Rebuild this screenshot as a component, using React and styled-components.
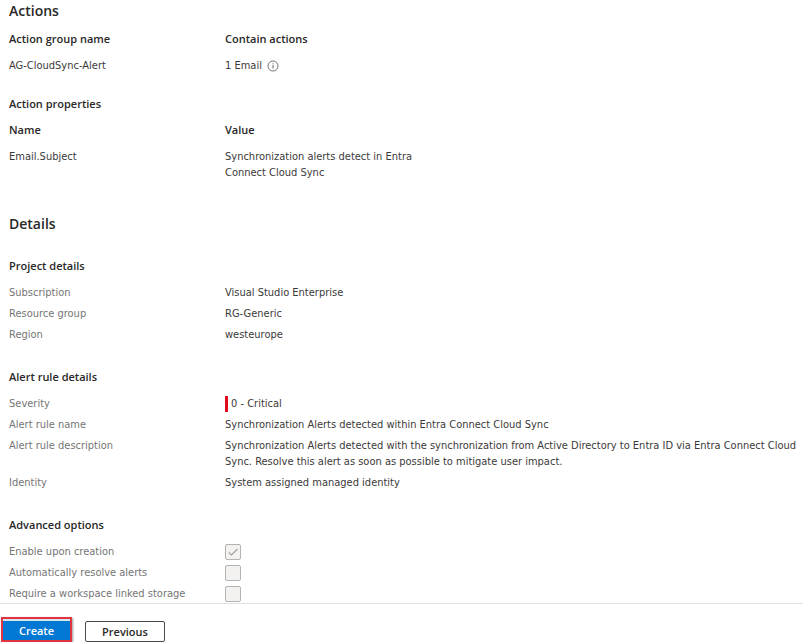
import React from 'react'
import styled, { createGlobalStyle } from 'styled-components'

const GlobalStyle = createGlobalStyle`
  * {
    box-sizing: border-box;
  }
  body {
    margin: 0;
    background: #fff;
    color: #3b3a39;
    font-family: "DejaVu Sans Condensed", "Open Sans", sans-serif;
    font-size: 11px;
    line-height: 16px;
  }
`

const headingFont = '"Open Sans", "Noto Sans", sans-serif'

const Content = styled.main`
  padding: 0 4px 1px 9px;
`

const SectionTitle = styled.h2`
  margin: 0;
  padding-top: ${({ $spaced }) => ($spaced ? '33px' : '1px')};
  color: #292827;
  font-family: ${headingFont};
  font-size: 14px;
  line-height: 20px;
  font-weight: 600;
`

const SubTitle = styled.h3`
  margin: 0;
  padding-top: ${({ $gap }) => $gap}px;
  color: #292827;
  font-family: ${headingFont};
  font-size: 11px;
  font-weight: 600;
`

const Table = styled.table`
  margin-top: 10px;
  width: 432px;
  table-layout: fixed;
  border-collapse: collapse;
`

const HeadCell = styled.th`
  padding: 0;
  color: #292827;
  font-family: ${headingFont};
  text-align: left;
  font-weight: 600;
`

const Cell = styled.td`
  padding: 11px 24px 0 0;
  vertical-align: top;
`

const InfoLine = styled.span`
  display: flex;
  align-items: center;
  gap: 5px;
`

const Fields = styled.div`
  display: flex;
  flex-direction: column;
  gap: 5px;
  padding-top: 11px;
`

const FieldRow = styled.div`
  display: grid;
  grid-template-columns: 216px 1fr;
`

const FieldName = styled.span`
  color: #757575;
`

const FieldLabel = styled.label`
  color: #757575;
`

const Severity = styled.span`
  display: flex;
  align-items: center;
  gap: 3px;
`

const SeverityBar = styled.span`
  width: 3px;
  height: 16px;
  background: #e00b1c;
`

const CheckHolder = styled.span`
  display: grid;
  width: 16px;
  height: 16px;

  > * {
    grid-area: 1 / 1;
  }
`

const Checkbox = styled.input`
  appearance: none;
  width: 16px;
  height: 16px;
  margin: 0;
  border: 1px solid #b5b3b1;
  border-radius: 2px;
  background: #f3f2f1;
`

const Footer = styled.footer`
  display: flex;
  align-items: flex-start;
  gap: 13px;
  padding: 13px 1px 0;
  border-top: 1px solid #e1e1e1;
`

const Highlight = styled.div`
  padding-top: 2px;
  border: 2px solid #e0343f;
  background: #d5e6ee;
  box-shadow: 1px 1px 2px rgba(0, 0, 0, 0.4);
`

const Button = styled.button`
  display: block;
  width: ${({ $primary }) => ($primary ? '67px' : '80px')};
  height: ${({ $primary }) => ($primary ? '19px' : '21px')};
  margin-top: ${({ $primary }) => ($primary ? '0' : '4px')};
  padding: 0;
  border: ${({ $primary }) => ($primary ? 'none' : '1px solid #4a4a4a')};
  border-radius: ${({ $primary }) => ($primary ? '0' : '2px')};
  background: ${({ $primary }) => ($primary ? '#0078d4' : '#fff')};
  color: ${({ $primary }) => ($primary ? '#fff' : '#292827')};
  font: 600 11px/16px ${headingFont};
`

const InfoIcon = () => (
  <svg width="12" height="12" viewBox="0 0 12 12" fill="none" stroke="#666" aria-hidden="true">
    <circle cx="6" cy="6" r="5" strokeWidth="0.9" />
    <path d="M6 5.2V8.6M6 3.3V4.3" strokeWidth="1" />
  </svg>
)

const CheckMark = () => (
  <svg width="16" height="16" viewBox="0 0 16 16" fill="none" stroke="#a19f9d" aria-hidden="true">
    <path d="M3.8 8.3L6.5 11L12.4 5" strokeWidth="1.1" />
  </svg>
)

const projectDetails = [
  { name: 'Subscription', value: 'Visual Studio Enterprise' },
  { name: 'Resource group', value: 'RG-Generic' },
  { name: 'Region', value: 'westeurope' },
]

const ruleDetails = [
  {
    name: 'Severity',
    value: (
      <Severity>
        <SeverityBar />
        0 - Critical
      </Severity>
    ),
  },
  { name: 'Alert rule name', value: 'Synchronization Alerts detected within Entra Connect Cloud Sync' },
  {
    name: 'Alert rule description',
    value: 'Synchronization Alerts detected with the synchronization from Active Directory to Entra ID via Entra Connect Cloud Sync. Resolve this alert as soon as possible to mitigate user impact.',
  },
  { name: 'Identity', value: 'System assigned managed identity' },
]

const options = [
  { id: 'enable', label: 'Enable upon creation', checked: true },
  { id: 'resolve', label: 'Automatically resolve alerts', checked: false },
  { id: 'storage', label: 'Require a workspace linked storage', checked: false },
]

const FieldList = ({ fields }) => (
  <Fields>
    {fields.map(({ name, value }) => (
      <FieldRow key={name}>
        <FieldName>{name}</FieldName>
        <div>{value}</div>
      </FieldRow>
    ))}
  </Fields>
)

const DataTable = ({ heads, cells }) => (
  <Table>
    <thead>
      <tr>
        {heads.map((head) => <HeadCell key={head} scope="col">{head}</HeadCell>)}
      </tr>
    </thead>
    <tbody>
      <tr>
        {cells.map((cell, index) => <Cell key={heads[index]}>{cell}</Cell>)}
      </tr>
    </tbody>
  </Table>
)

const App = () => (
  <>
    <GlobalStyle />
    <Content>
      <SectionTitle>Actions</SectionTitle>
      <DataTable
        heads={['Action group name', 'Contain actions']}
        cells={[
          'AG-CloudSync-Alert',
          <InfoLine>
            1 Email
            <InfoIcon />
          </InfoLine>,
        ]} />
      <SubTitle $gap={22}>Action properties</SubTitle>
      <DataTable
        heads={['Name', 'Value']}
        cells={['Email.Subject', 'Synchronization alerts detect in Entra Connect Cloud Sync']} />

      <SectionTitle $spaced>Details</SectionTitle>
      <SubTitle $gap={24}>Project details</SubTitle>
      <FieldList fields={projectDetails} />
      <SubTitle $gap={26}>Alert rule details</SubTitle>
      <FieldList fields={ruleDetails} />
      <SubTitle $gap={26}>Advanced options</SubTitle>
      <Fields>
        {options.map(({ id, label, checked }) => (
          <FieldRow key={id}>
            <FieldLabel htmlFor={id}>{label}</FieldLabel>
            <CheckHolder>
              <Checkbox type="checkbox" id={id} defaultChecked={checked} disabled />
              {checked && <CheckMark />}
            </CheckHolder>
          </FieldRow>
        ))}
      </Fields>
    </Content>
    <Footer>
      <Highlight>
        <Button type="button" $primary>Create</Button>
      </Highlight>
      <Button type="button">Previous</Button>
    </Footer>
  </>
)

export default App
